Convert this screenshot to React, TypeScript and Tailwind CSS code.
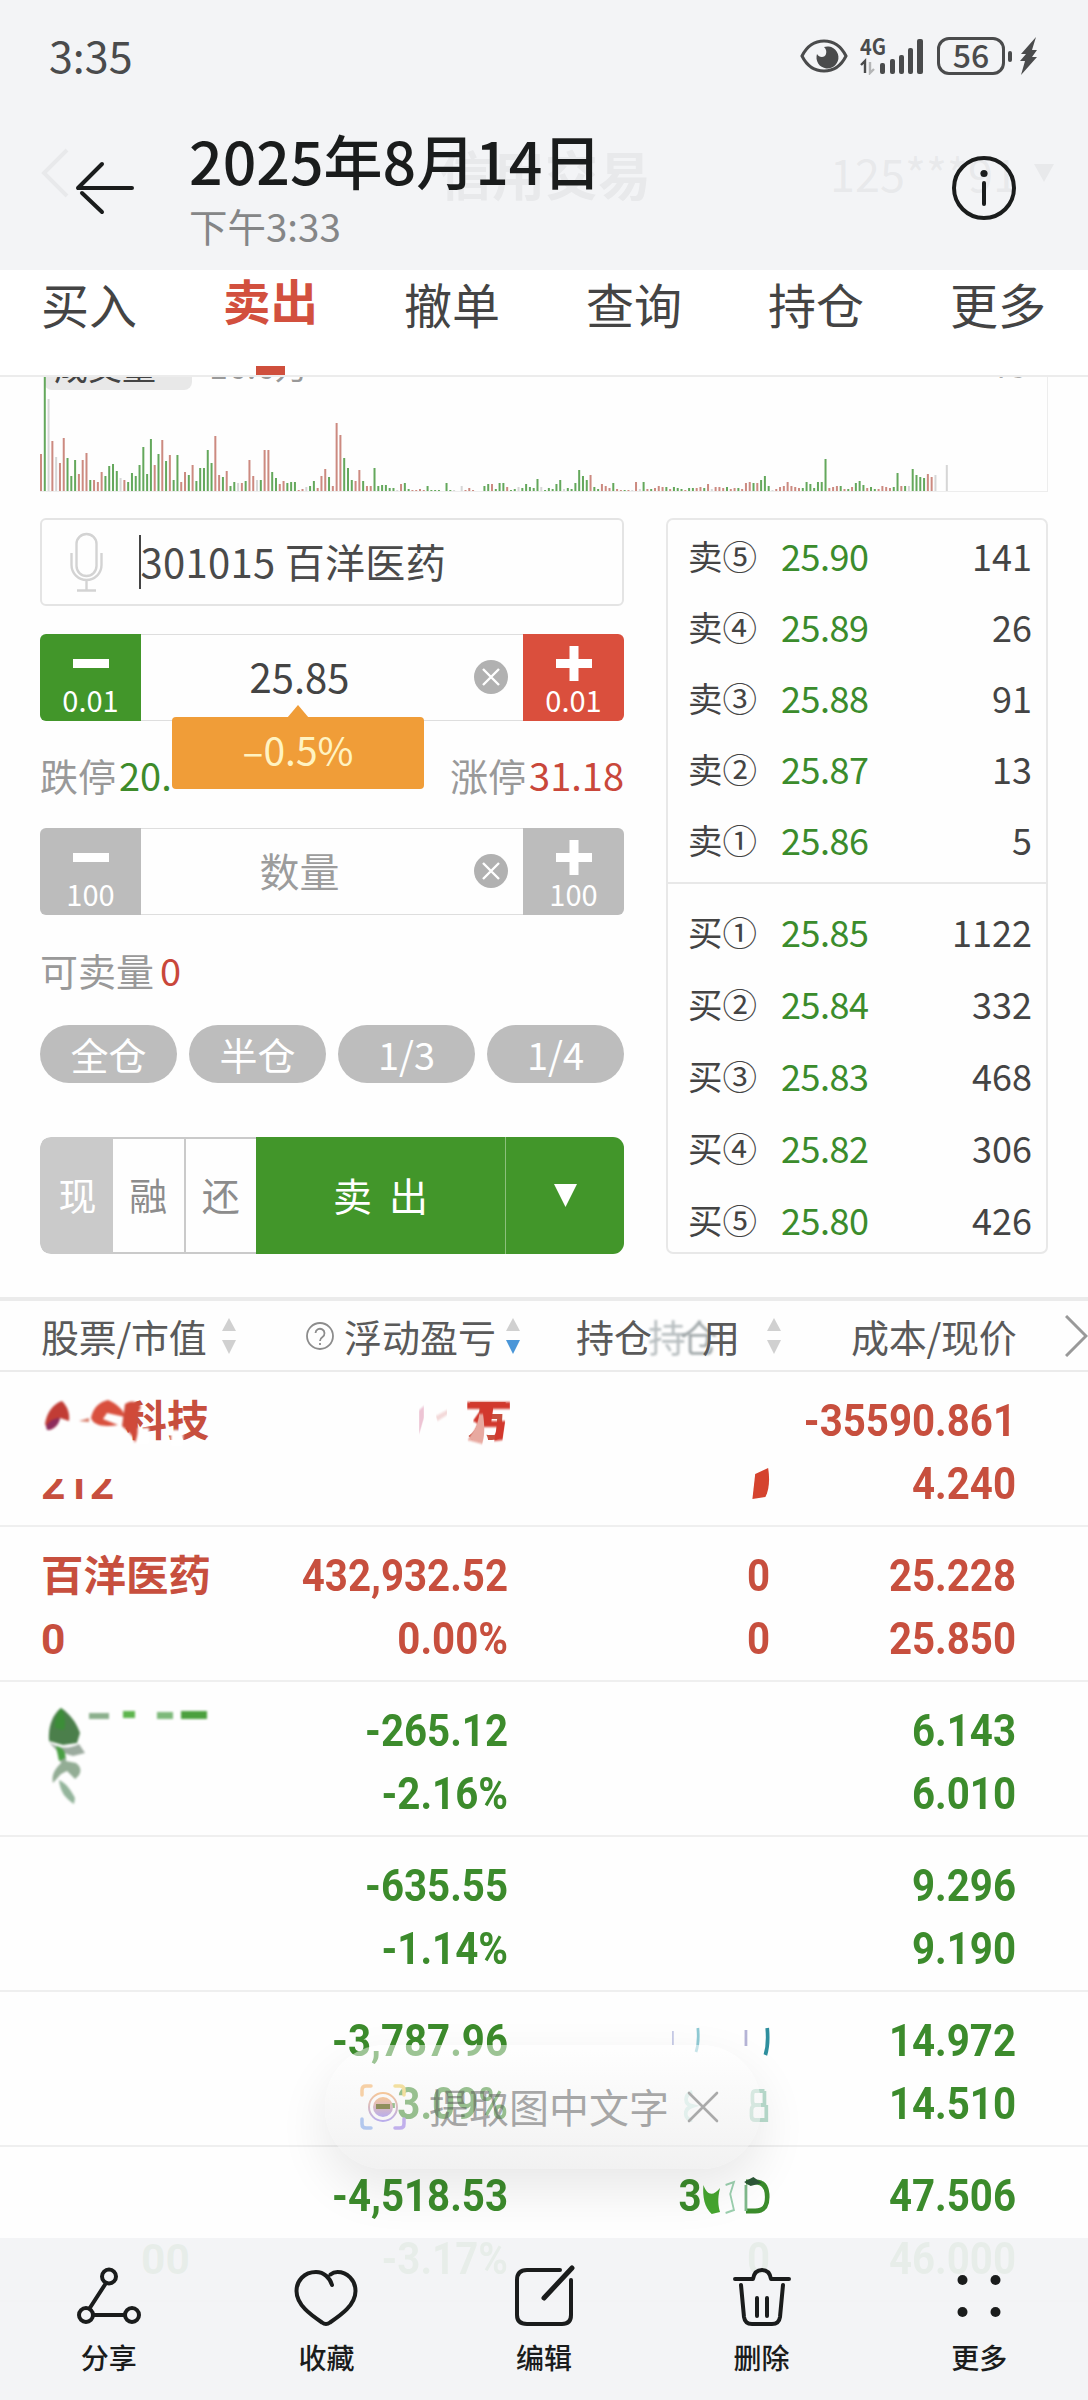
import type { ReactNode } from 'react';

type Level = { label: string; price: string; volume: string };

const sells: Level[] = [
  { label: '卖⑤', price: '25.90', volume: '141' },
  { label: '卖④', price: '25.89', volume: '26' },
  { label: '卖③', price: '25.88', volume: '91' },
  { label: '卖②', price: '25.87', volume: '13' },
  { label: '卖①', price: '25.86', volume: '5' },
];

const buys: Level[] = [
  { label: '买①', price: '25.85', volume: '1122' },
  { label: '买②', price: '25.84', volume: '332' },
  { label: '买③', price: '25.83', volume: '468' },
  { label: '买④', price: '25.82', volume: '306' },
  { label: '买⑤', price: '25.80', volume: '426' },
];

// one entry per minute: colour letter (r, g, w = flat) and bar height
const volume =
  'r38 g115 w93 r51 w35 r29 r54 g34 g16 g32 r18 r32 r39 g12 r12 r10 r20 g16 g26 g28 g21 w14 r12 g10 g19 g16 g27 g45 g18 g53 r27 g38 r52 g31 r37 g12 g37 r10 r20 g17 r27 g11 g24 g24 g42 g29 r56 r17 g15 r21 g6 g10 w9 r9 g11 r32 r16 w12 g12 r42 r42 g20 g14 r8 r11 g9 g10 g10 r2 r3 w5 g6 g11 r4 r16 r23 g15 r6 r69 r57 g34 g24 g12 r11 r22 g11 r6 r6 g24 g6 g7 g7 g4 g4 w2 r8 g9 g3 r2 r2 r3 r2 g6 g2 g2 g2 w1 g9 g2 w2 w1 w6 r2 r4 r2 w1 w1 g6 g8 r8 g3 g9 g9 r5 g2 g3 w5 g4 g8 g5 g4 g13 w5 g2 g4 g3 g8 g12 w3 g4 g3 g9 g22 g16 g12 r17 g5 g3 r8 r6 r4 g9 r3 r2 g2 r2 w2 r10 w3 g10 r3 g3 r4 r6 r5 g5 r3 g5 g4 g3 r2 g4 g4 r4 r5 g4 r8 w3 r5 r5 r4 g5 r3 r4 g4 r3 r9 r10 g9 r9 g12 g16 g6 w2 r3 r5 r6 r10 r6 r5 r4 g4 g10 g8 g4 g10 g10 g33 r4 r5 r6 g6 r3 g3 r5 g9 g11 g7 r4 g5 g3 r3 r6 r5 r4 g5 g19 r6 g6 w6 g23 g17 g15 g14 r18 r15 w17 w0 w0 w27';

const barColors: Record<string, string> = { r: '#cc8a80', g: '#64a85c', w: '#d6d6d6' };

const tabs = ['买入', '卖出', '撤单', '查询', '持仓', '更多'];

const StatusBar = () => (
  <div className="flex h-28 items-center justify-between pl-[49px] pr-[50px] text-[#4a4b4c]">
    <span className="-mt-1 text-[43px] leading-[60px]">3:35</span>
    <div className="flex items-center">
      <svg width="48" height="34" viewBox="0 0 48 34" fill="none" stroke="currentColor" strokeWidth="3">
        <path d="M2 17C7 7 15 2 24 2s17 5 22 15c-5 10-13 15-22 15S7 27 2 17Z" />
        <path
          d="M24 8a7 7 0 0 1 2 7c-1 4-7 4-9 0a11 11 0 1 0 7-7Z"
          fill="currentColor"
          stroke="none"
        />
      </svg>
      <svg className="ml-3" width="65" height="38" viewBox="0 0 65 38">
        <text x="0" y="18" fontSize="22" fontWeight="700" fill="currentColor" textLength="26" lengthAdjust="spacingAndGlyphs">4G</text>
        <path d="M1 28l4-4v12" fill="none" stroke="currentColor" strokeWidth="2.4" />
        <path d="M10 25v11l4-4" fill="none" stroke="#b4b5b6" strokeWidth="2.4" />
        <g fill="currentColor">
          <rect x="20" y="26" width="5" height="11" rx="2" />
          <rect x="30" y="22" width="5" height="15" rx="2" />
          <rect x="39" y="18" width="5" height="19" rx="2" />
          <rect x="48" y="11" width="5" height="26" rx="2" />
          <rect x="57" y="2" width="6" height="35" rx="2" />
        </g>
      </svg>
      <div className="ml-3 flex h-[38px] w-[68px] items-center justify-center rounded-[12px] border-[3px] border-[#4a4b4c] text-[32px] font-medium leading-[32px]">
        <span className="-mt-1">56</span>
      </div>
      <div className="ml-[3px] h-[11px] w-1 rounded-full bg-[#4a4b4c]" />
      <svg className="ml-2" width="18" height="38" viewBox="0 0 18 38" fill="currentColor">
        <path d="M16 0 1 17h5L0 24h5L1 38 17 20h-5l5-7h-5Z" />
      </svg>
    </div>
  </div>
);

const GalleryHeader = () => (
  <header className="absolute inset-x-0 top-0 z-10 h-[270px] bg-[#f2f3f5]/94">
    <StatusBar />
    <div className="flex pl-[74px] pr-[71px]">
      <svg className="mt-[48px]" width="60" height="56" viewBox="0 0 60 56" fill="none" stroke="#1a1c1c" strokeWidth="4" strokeLinecap="round">
        <path d="M4 28h54M28 4 4 28M8 33l20 19" />
      </svg>
      <div className="ml-[55px] flex-1 pt-0.5">
        <h1 className="whitespace-nowrap text-[59px] font-medium leading-[92px] text-[#1a1c1c]">2025年8月14日</h1>
        <p className="text-[38.5px] leading-[38px] text-[#858687]">下午3:33</p>
      </div>
      <svg className="mt-[43px]" width="66" height="66" viewBox="0 0 66 66" fill="none" stroke="#1a1c1c" strokeWidth="4" strokeLinecap="round">
        <circle cx="33" cy="33" r="30" />
        <path d="M33 28v21" />
        <circle cx="33" cy="18.500" r="3.600" fill="#1a1c1c" stroke="none" />
      </svg>
    </div>
  </header>
);

const TradeNav = () => (
  <div className="flex h-[270px] items-center justify-between pl-[40px] pr-[34px] pt-[76px] text-[#444]">
    <svg width="30" height="50" viewBox="0 0 30 50" fill="none" stroke="currentColor" strokeWidth="4">
      <path d="M27 2 4 25l23 23" />
    </svg>
    <span className="ml-[190px] text-[53px] font-bold leading-[60px]">信用交易</span>
    <span className="flex items-center gap-4 text-[45px] leading-[60px]">
      125***91
      <svg width="20" height="18" viewBox="0 0 20 18" fill="currentColor">
        <path d="M0 0h20L10 18Z" />
      </svg>
    </span>
  </div>
);

const Tabs = () => (
  <nav className="flex h-[107px] justify-between border-b-2 border-[#ececec] bg-white pl-[41px] pr-[42px]">
    {tabs.map((tab) =>
      tab === '卖出' ? (
        <div key={tab} className="flex flex-col items-center justify-between">
          <span className="text-[47.500px] font-bold leading-[60px] text-[#d2503e]">{tab}</span>
          <span className="h-[9px] w-[29px] bg-[#cf4f3c]" />
        </div>
      ) : (
        <span key={tab} className="pt-[3px] text-[48px] leading-[60px] text-[#444]">{tab}</span>
      ),
    )}
  </nav>
);

const VolumeChart = () => (
  <div className="relative mx-[40px] h-[115px] overflow-hidden border-b border-r border-[#ededed]">
    <div className="absolute left-1 -top-9 flex items-center text-[34px] leading-[48px]">
      <span className="flex h-[48px] items-center gap-3 rounded-lg bg-[#e8e8e8] pl-2.5 pr-2 text-[#444]">
        <span>成交量</span>
        <span className="text-[16px]">▼</span>
      </span>
      <span className="ml-[17px] pb-0.5 text-[#999]">16.6万</span>
    </div>
    <span className="absolute -top-[32px] right-[20px] text-[30px] leading-[40px] text-[#aaa]">75</span>
    <svg className="absolute left-0 top-0" width="1006" height="115" viewBox="0 0 1006 115">
      {volume.split(' ').map((item, i) => {
        const h = Number(item.slice(1));
        return <rect key={i} x={i * 3.79} y={115 - h} width="2" height={h} fill={barColors[item[0]]} />;
      })}
    </svg>
  </div>
);

const Clear = () => (
  <svg className="-mt-0.5 mr-[15px]" width="34" height="34" viewBox="0 0 34 34">
    <circle cx="17" cy="17" r="17" fill="#b1b1b1" />
    <path d="m9 9 16 16M25 9 9 25" stroke="#fff" strokeWidth="2.400" />
  </svg>
);

const StepButton = ({ sign, step, className }: { sign: '+' | '-'; step: string; className: string }) => (
  <button className={`flex w-[101px] flex-col items-center pt-[9px] text-white ${className}`}>
    <svg width="36" height="40" viewBox="0 0 36 40" fill="#fff">
      <rect x="0" y="16" width="36" height="9" />
      {sign === '+' && <rect x="13.500" y="3" width="9" height="35" />}
    </svg>
    <span className="text-[29px] leading-[33px]">{step}</span>
  </button>
);

const Stepper = ({ children, step, minus, plus }: { children: ReactNode; step: string; minus: string; plus: string }) => (
  <div className="flex h-[87px] overflow-hidden rounded-[6px]">
    <StepButton sign="-" step={step} className={minus} />
    <div className="flex flex-1 items-center border-y border-[#dedede]">
      <div className="flex-1 pb-[3px] pr-4 text-center text-[40px]">{children}</div>
      <Clear />
    </div>
    <StepButton sign="+" step={step} className={plus} />
  </div>
);

const OrderForm = () => (
  <div className="w-[584px]">
    <div className="flex h-[88px] items-center rounded-[6px] border-2 border-[#e4e4e4] pl-[28px]">
      <svg width="33" height="60" viewBox="0 0 33 60" fill="none" stroke="#d3d3d3" strokeWidth="2.400">
        <rect x="6.500" y="2" width="20" height="42" rx="10" />
        <path d="M1.500 21v12a15 15 0 0 0 30 0V21M16.500 48v10M7 58.500h19" />
      </svg>
      <span className="ml-[36px] h-[54px] w-[1.500px] bg-[#444]" />
      <span className="-mt-[3px] whitespace-nowrap text-[40px] leading-[54px] tracking-[0.3px] text-[#4a4a4a]">301015 百洋医药</span>
    </div>

    <div className="relative mt-[28px]">
      <Stepper step="0.01" minus="bg-[#42962a]" plus="bg-[#da4f3d]">
        <span className="text-[#444]">25.85</span>
      </Stepper>
      <div className="absolute left-[132px] top-[83px] flex h-[72px] w-[252px] items-center justify-center rounded-[4px] bg-[#f09d38] pb-2 text-[39px] text-[#fff3c2]">
        <svg className="absolute -top-[12px] left-[115px]" width="22" height="13" viewBox="0 0 22 13" fill="#f09d38">
          <path d="M11 0 22 13H0Z" />
        </svg>
        –0.5%
      </div>
    </div>

    <div className="mt-[25px] flex h-[56px] items-center justify-between text-[38px] text-[#999]">
      <span>跌停<span className="pl-[3px] text-[#3d8b2a]">20.</span></span>
      <span>涨停<span className="pl-[3px] text-[#c9473a]">31.18</span></span>
    </div>

    <div className="mt-[26px]">
      <Stepper step="100" minus="bg-[#bcbcbc]" plus="bg-[#bcbcbc]">
        <span className="text-[#9c9c9c]">数量</span>
      </Stepper>
    </div>

    <div className="mt-[26px] flex h-[56px] items-center text-[38px] text-[#999]">
      可卖量<span className="pl-[6px] text-[#c9473a]">0</span>
    </div>

    <div className="mt-[28px] flex gap-[12px]">
      {['全仓', '半仓', '1/3', '1/4'].map((text) => (
        <button key={text} className="h-[58px] flex-1 rounded-full bg-[#bdbdbd] text-[38px] leading-[54px] text-white">
          {text}
        </button>
      ))}
    </div>

    <div className="mt-[54px] flex h-[117px] overflow-hidden rounded-[11px] text-[38px]">
      <div className="flex w-[216px] rounded-l-[11px] border-2 border-r-0 border-[#cacaca] text-[#8c8c8c]">
        <span className="flex w-[71px] items-center justify-center bg-[#cacaca] pb-1 text-white">现</span>
        <span className="flex flex-1 items-center justify-center border-r-2 border-[#cacaca] pb-1">融</span>
        <span className="flex flex-1 items-center justify-center pb-1">还</span>
      </div>
      <button className="flex w-[250px] items-center justify-center gap-[17px] border-r border-[#8cc07c] bg-[#42962a] pb-0.5 text-[39px] text-white">
        <span>卖</span>
        <span>出</span>
      </button>
      <div className="flex flex-1 items-center justify-center bg-[#42962a]">
        <svg width="23" height="23" viewBox="0 0 23 23" fill="#fff">
          <path d="M0 0h23L11.500 23Z" />
        </svg>
      </div>
    </div>
  </div>
);

const LevelRow = ({ label, price, volume }: Level) => (
  <div className="flex items-center pl-[20px] pr-[14px] text-[36px] leading-[48px] text-[#444]">
    <span className="w-[93px] text-[34.500px]">{label}</span>
    <span className="tracking-[-0.5px] text-[#3b8c2c]">{price}</span>
    <span className="flex-1 text-right">{volume}</span>
  </div>
);

const OrderBook = () => (
  <div className="h-[736px] w-[382px] rounded-[7px] border-2 border-[#e8e8e8]">
    <div className="flex h-[364px] flex-col gap-[23px] border-b-2 border-[#e8e8e8] pt-[11px]">
      {sells.map((level) => <LevelRow key={level.label} {...level} />)}
    </div>
    <div className="flex flex-col gap-[24px] pt-[23px]">
      {buys.map((level) => <LevelRow key={level.label} {...level} />)}
    </div>
  </div>
);

const Sort = ({ down }: { down?: boolean }) => (
  <svg width="14" height="36" viewBox="0 0 14 36">
    <path d="M7 0 14 13H0Z" fill="#d0d0d0" />
    <path d="M7 36 14 22H0Z" fill={down ? '#4a96d8' : '#d0d0d0'} />
  </svg>
);

const TableHead = () => (
  <div className="flex h-[75px] items-center border-b-2 border-t-4 border-[#ebebeb] pl-[41px] text-[38px] text-[#5a5a5a]">
    <div className="flex w-[195px] items-center justify-between">
      <span className="tracking-[-0.3px]">股票/市值</span>
      <Sort />
    </div>
    <div className="ml-[70px] flex w-[214px] items-center justify-between">
      <svg width="28" height="28" viewBox="0 0 28 28" fill="none" stroke="#8c8c8c" strokeWidth="1.800">
        <circle cx="14" cy="14" r="13" />
        <path d="M9.500 11a4.500 4.500 0 1 1 7 4c-2 1.300-2.500 2-2.500 4M14 21v2" />
      </svg>
      <span>浮动盈亏</span>
      <Sort down />
    </div>
    <div className="ml-[56px] flex w-[205px] items-center justify-between">
      <span className="relative h-[58px] w-[164px] leading-[58px]">
        持仓
        <span className="absolute right-[54px] top-0 text-[#9aa3a6] opacity-70 blur-[1px]">持</span>
        <span className="absolute right-[22px] top-0 text-[#8d9698] opacity-80 blur-[1px]">仓</span>
        <span className="absolute right-0 top-0">用</span>
      </span>
      <Sort />
    </div>
    <span className="ml-[70px] tracking-[-0.3px]">成本/现价</span>
    <svg className="ml-auto" width="23" height="42" viewBox="0 0 23 42" fill="none" stroke="#999" strokeWidth="3">
      <path d="m1 1 20 20L1 41" />
    </svg>
  </div>
);

const Cell = ({ children }: { children: ReactNode }) => (
  <div className="relative h-[126px] origin-right scale-x-[0.925] text-right leading-[63px]">{children}</div>
);

const SmearedName = () => (
  <div className="relative h-[63px] pl-[84px] text-[42px]">
    科技
    <svg className="absolute left-0 top-0 blur-[0.8px]" width="175" height="63" viewBox="0 0 175 63">
      <path d="M80 10h14v16H80ZM130 40h12v16h-12ZM94 38h14v16H94Z" fill="#fff" />
      <path d="M4 34c2-12 8-20 17-23 6 6 8 13 7 20l-9-3c-1 6-6 12-12 12Z" fill="#c13c35" />
      <path d="M5 36c4-6 9-8 14-8-1 6-6 12-13 12Z" fill="#8d2c5c" />
      <path d="M38 31l10-3v4Z" fill="#d77b68" />
      <path d="M50 28c2-10 8-16 17-18 9 4 16 10 17 17l-18-4-4 6 15 6c-14 2-24 1-27-7Z" fill="#d9503e" />
      <path d="M84 14c8-5 12-2 16 3l-6 12c4 8 3 16 0 24-2-9-8-12-13-17Z" fill="#d04a39" />
    </svg>
  </div>
);

const SmearedProfit = () => (
  <div className="relative h-[63px]">
    万
    <svg className="absolute -right-1 top-0 blur-[0.8px]" width="110" height="63" viewBox="0 0 110 63">
      <path d="M10 20l5-4v12l-5 16Z" fill="#edc4d4" />
      <path d="M28 26l12-6v5l-10 6Z" fill="#f3d9d9" />
      <path d="M62 12h46v7H90l-2 12h15l-3 19-9 1 3-14H80l-12-6 9-12H62Z" fill="#d2382d" />
      <path d="M62 50c8-9 12-18 13-26h4c2 12 2 22-1 30Z" fill="#e8a9a0" />
    </svg>
  </div>
);

const SmearedGreen = () => (
  <svg className="blur-[1px]" width="175" height="126" viewBox="0 0 175 126">
    <path d="M20 8c9 6 15 14 19 25l-3 10-14 2-14-4c-1-14 3-26 12-33Z" fill="#4b7f4b" />
    <path d="M20 8c4 5 5 15 3 22l-9-2c-1-8 2-15 6-20Z" fill="#3c8d38" />
    <path d="M8 42c8 6 18 8 30 2l6 9-12 3-16-5Z" fill="#9cab9f" />
    <path d="M15 48c7 1 11 6 10 13l10 2c7 5 5 12-1 16l-8-8-6 3-8 9c-2-9 3-15 8-20Z" fill="#93ad95" />
    <path d="M15 46c6 1 10 5 9 12l-6 3Z" fill="#4aa044" />
    <path d="M18 80c8 4 11 9 16 18l-1 6c-8-5-14-12-15-24Z" fill="#94b59c" />
    <rect x="48" y="13" width="20" height="6" fill="#8cb08d" />
    <rect x="82" y="11" width="12" height="7" fill="#5eb54e" />
    <rect x="116" y="12" width="16" height="7" fill="#7db97a" />
    <rect x="140" y="11" width="26" height="8" fill="#4ba03e" />
  </svg>
);

const SmearedTicks = () => (
  <svg className="absolute right-0 top-0 blur-[0.7px]" width="106" height="126" viewBox="0 0 106 126" fill="none">
    <path d="M1 21v14" stroke="#c7cbe6" strokeWidth="2" />
    <path d="M28 18c1 10 1 16-2 24" stroke="#8fcad4" strokeWidth="3" />
    <path d="M80 20v16" stroke="#b5b4d6" strokeWidth="3" />
    <path d="M103 18c1 10 1 18-2 27" stroke="#2e8f9e" strokeWidth="4" />
    <path d="M22 82c-9 3-9 12 0 14-10 3-9 14 0 14" stroke="#d3eee8" strokeWidth="4" />
    <path d="M100 81H90q-3 0-3 4v6q0 4 3 4h10V81M90 95q-4 1-4 5v6q0 4 4 4h12V95" stroke="#b9dccd" strokeWidth="4" />
  </svg>
);

const SmearedHolding = () => (
  <div className="relative h-[63px]">
    <span className="absolute right-[74px] top-0">3</span>
    <svg className="absolute right-0 top-0 blur-[0.7px]" width="78" height="63" viewBox="0 0 78 63">
      <path d="M6 20c4 10 10 12 18 3-3 11-2 18 0 24l-9 2c-8-7-10-17-9-29Z" fill="#45a52f" />
      <path d="M30 20l9-3-4 12 4 16-9 3" fill="none" stroke="#9bcfae" strokeWidth="2" />
      <path d="M52 17h10c9 0 13 5 13 15s-4 14-13 14H52" fill="none" stroke="#3b8c2c" strokeWidth="5" />
      <path d="M52 20v26" fill="none" stroke="#7fb98b" strokeWidth="3" />
      <path d="M50 17l10-5 9 6-12 3Z" fill="#2d5738" />
    </svg>
  </div>
);

type Holding = { color: string; name: ReactNode; profit: ReactNode; amount: ReactNode; cost: string; price: string };

const holdings: Holding[] = [
  {
    color: 'text-[#c74f3e]',
    name: (
      <>
        <SmearedName />
        <div className="relative h-[63px]">
          212
          <div className="absolute left-0 top-0 h-[26px] w-full bg-[#fefefe]" />
        </div>
      </>
    ),
    profit: <SmearedProfit />,
    amount: (
      <svg className="absolute right-0 top-[78px] blur-[0.6px]" width="21" height="32" viewBox="0 0 21 32">
        <path d="M5 6 19 0c2 12 1 22-3 29L2 31Z" fill="#d5432e" />
      </svg>
    ),
    cost: '-35590.861',
    price: '4.240',
  },
  {
    color: 'text-[#c74f3e]',
    name: <><div>百洋医药</div><div>0</div></>,
    profit: <><div>432,932.52</div><div>0.00%</div></>,
    amount: <><div>0</div><div>0</div></>,
    cost: '25.228',
    price: '25.850',
  },
  {
    color: 'text-[#3c8b2c]',
    name: <SmearedGreen />,
    profit: <><div>-265.12</div><div>-2.16%</div></>,
    amount: null,
    cost: '6.143',
    price: '6.010',
  },
  {
    color: 'text-[#3c8b2c]',
    name: null,
    profit: <><div>-635.55</div><div>-1.14%</div></>,
    amount: null,
    cost: '9.296',
    price: '9.190',
  },
  {
    color: 'text-[#3c8b2c]',
    name: null,
    profit: <><div>-3,787.96</div><div>-3.09%</div></>,
    amount: <SmearedTicks />,
    cost: '14.972',
    price: '14.510',
  },
  {
    color: 'text-[#3c8b2c]',
    name: <div className="pl-[100px] pt-[63px]">00</div>,
    profit: <><div>-4,518.53</div><div>-3.17%</div></>,
    amount: <><SmearedHolding /><div>0</div></>,
    cost: '47.506',
    price: '46.000',
  },
];

const HoldingRow = ({ color, name, profit, amount, cost, price }: Holding) => (
  <div className={`flex h-[155px] border-b-2 border-[#efefef] pl-[41px] pt-[18px] font-['Roboto','Noto_Sans_CJK_SC',sans-serif] text-[43.500px] font-bold leading-[63px] ${color}`}>
    <div className="h-[126px] w-[200px] text-[42.500px]">{name}</div>
    <div className="w-[267px]"><Cell>{profit}</Cell></div>
    <div className="w-[262px]"><Cell>{amount}</Cell></div>
    <div className="w-[246px]">
      <Cell>
        <div>{cost}</div>
        <div>{price}</div>
      </Cell>
    </div>
  </div>
);

const ExtractPill = () => (
  <div className="absolute left-[325px] top-[2045px] flex h-[124px] w-[436px] items-center rounded-[60px] bg-linear-to-b from-white/50 to-[#e5e5e5]/50 pl-[35px] shadow-[0_20px_50px_rgba(0,0,0,0.09)]">
    <svg width="46" height="46" viewBox="0 0 46 46" fill="none" strokeWidth="3.500" strokeLinecap="round">
      <path d="M2 11V6q0-4 4-4h5" stroke="#f6d0a6" />
      <path d="M35 2h5q4 0 4 4v5" stroke="#f2dfa0" />
      <path d="M2 35v5q0 4 4 4h5" stroke="#b3c8ee" />
      <path d="M35 44h5q4 0 4-4v-5" stroke="#c1b0ec" />
      <circle cx="23" cy="23" r="14" stroke="url(#lens)" strokeWidth="2" />
      <circle cx="23" cy="23" r="10" fill="url(#lens)" />
      <rect x="16" y="20" width="14" height="5" fill="#8f8f5c" />
      <defs>
        <linearGradient id="lens" x1="0" y1="0" x2="0" y2="1">
          <stop offset="0" stopColor="#f5c79a" />
          <stop offset="1" stopColor="#b9adec" />
        </linearGradient>
      </defs>
    </svg>
    <span className="-mt-[3px] ml-[23px] whitespace-nowrap text-[40px] leading-[60px] text-[#555]/50">提取图中文字</span>
    <svg className="ml-[18px]" width="32" height="32" viewBox="0 0 32 32" fill="none" stroke="#aaa" strokeWidth="2.600" strokeLinecap="round">
      <path d="m2 2 28 28M30 2 2 30" />
    </svg>
  </div>
);

const actions = [
  {
    label: '分享',
    icon: (
      <>
        <circle cx="32" cy="11.500" r="7" />
        <circle cx="9" cy="50" r="7" />
        <circle cx="55" cy="50" r="7" />
        <path d="M29 18 12.500 43.500M16 50h32" />
      </>
    ),
  },
  {
    label: '收藏',
    icon: (
      <path d="M38 20c-2-7-8-13-16-13C10 7 2.500 16 2.500 26 2.500 40 17 50 28 57.500q4 3 8 0C47 50 61.500 40 61.500 26 61.500 15 53 7 43.500 7q-4 0-7 2.500" />
    ),
  },
  {
    label: '编辑',
    icon: (
      <>
        <path d="M48 5H15Q5 5 5 15v35q0 9 10 9h35q9 0 9-9V15" />
        <path d="M60 3 32 33" strokeWidth="5" />
      </>
    ),
  },
  {
    label: '删除',
    icon: (
      <>
        <path d="M5 14h18c1-6 4-9 9-9s8 3 9 9h18" />
        <path d="M11 20l3 32q1 7 8 7h20q7 0 8-7l3-32M27 33v18M37 33v18" />
      </>
    ),
  },
  {
    label: '更多',
    icon: (
      <g fill="#1a1c1c" stroke="none">
        <circle cx="15.500" cy="15" r="5" />
        <circle cx="48.500" cy="15" r="5" />
        <circle cx="15.500" cy="47" r="5" />
        <circle cx="48.500" cy="47" r="5" />
      </g>
    ),
  },
];

const BottomBar = () => (
  <footer className="absolute inset-x-0 bottom-0 z-10 flex h-[162px] bg-[#f2f3f5]/94">
    {actions.map(({ label, icon }) => (
      <div key={label} className="flex flex-1 flex-col items-center pt-[27px]">
        <svg width="64" height="62" viewBox="0 0 64 62" fill="none" stroke="#1a1c1c" strokeWidth="4" strokeLinecap="round" strokeLinejoin="round">
          {icon}
        </svg>
        <span className="mt-[10px] text-[28px] font-medium leading-[40px] text-[#1a1c1c]">{label}</span>
      </div>
    ))}
  </footer>
);

export default function App() {
  return (
    <div className="relative h-[2400px] w-[1088px] overflow-hidden bg-[#fefefe] font-['Noto_Sans_CJK_SC',sans-serif]">
      <GalleryHeader />
      <TradeNav />
      <Tabs />
      <VolumeChart />
      <div className="flex justify-between px-[40px] pt-[26px]">
        <OrderForm />
        <OrderBook />
      </div>
      <div className="mt-[43px]">
        <TableHead />
        {holdings.map((holding) => <HoldingRow key={holding.cost} {...holding} />)}
      </div>
      <ExtractPill />
      <BottomBar />
    </div>
  );
}
